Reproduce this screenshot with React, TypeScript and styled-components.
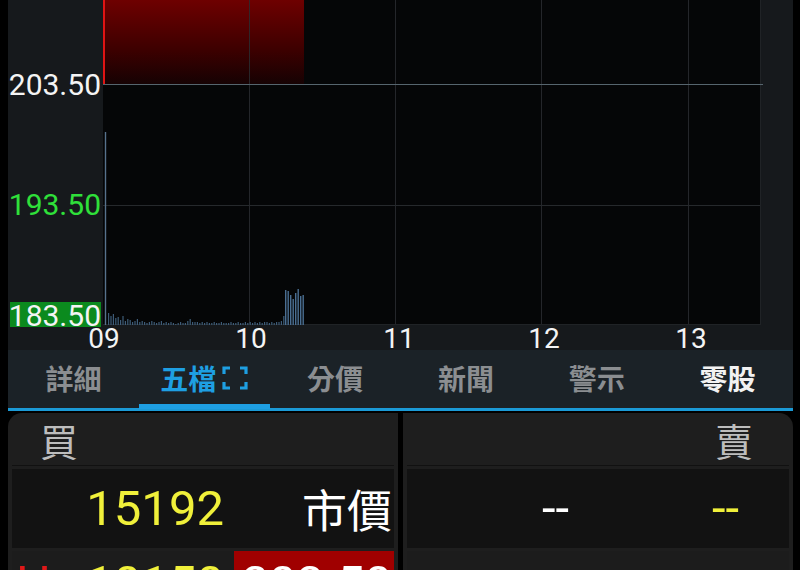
import styled, { createGlobalStyle } from "styled-components";

const GlobalStyle = createGlobalStyle`
  html, body {
    margin: 0;
    padding: 0;
    background: #000;
    overflow: hidden;
  }
  body {
    font-family: Roboto, "Noto Sans CJK TC", sans-serif;
  }
`;

const Screen = styled.div`
  width: 800px;
  height: 570px;
  box-sizing: border-box;
  padding: 0 7px 0 8px;
  background: #000;
  display: flex;
  flex-direction: column;
  overflow: hidden;
`;

const ChartSvg = styled.svg`
  display: block;
  flex: none;
`;

const TabBar = styled.nav`
  flex: none;
  height: 58px;
  display: flex;
  background: #1b2227;
  border-bottom: 3px solid #1b9ad6;
`;

const Tab = styled.div<{ $active?: boolean; $bright?: boolean }>`
  flex: 1;
  position: relative;
  display: flex;
  align-items: center;
  justify-content: center;
  gap: 6px;
  font-family: "Noto Sans CJK TC", sans-serif;
  font-weight: 700;
  font-size: 28px;
  padding-bottom: 2px;
  color: ${(p) => (p.$active ? "#1e9fe2" : p.$bright ? "#f2f2f2" : "#8b8e91")};

  &::after {
    content: "";
    display: ${(p) => (p.$active ? "block" : "none")};
    position: absolute;
    left: 0;
    right: 0;
    bottom: -1px;
    height: 5px;
    background: #1e9fe2;
  }
`;

const Book = styled.section`
  flex: 1;
  display: grid;
  grid-template-columns: 390px 1fr;
  gap: 5px;
  padding-top: 2px;
  background: #000;
  min-height: 0;
`;

const Side = styled.div<{ $right?: boolean }>`
  background: #1e1e1e;
  border-radius: ${(p) => (p.$right ? "0 14px 0 0" : "14px 0 0 0")};
  display: flex;
  flex-direction: column;
  gap: 3px;
  padding: 0 4px;
`;

const Header = styled.div<{ $right?: boolean }>`
  height: 52px;
  display: flex;
  align-items: center;
  justify-content: ${(p) => (p.$right ? "flex-end" : "flex-start")};
  padding: 0 36px 0 28px;
  font-family: "Noto Sans CJK TC", sans-serif;
  font-size: 38px;
  color: #bdbdbd;
  border-bottom: 1px solid #111;
`;

const Row = styled.div<{ $dark?: boolean }>`
  height: 79px;
  flex: none;
  display: flex;
  background: ${(p) => (p.$dark ? "#121212" : "#1c1c1c")};
`;

const Cell = styled.div<{ $w?: number; $color?: string; $bg?: string; $align?: string; $pr?: number; $pt?: number; $cjk?: boolean }>`
  ${(p) => (p.$w ? `width: ${p.$w}px; flex: none;` : "flex: 1;")}
  display: flex;
  align-items: ${(p) => (p.$pt !== undefined ? "flex-start" : "center")};
  justify-content: ${(p) => p.$align || "flex-end"};
  padding-right: ${(p) => p.$pr ?? 0}px;
  padding-top: ${(p) => p.$pt ?? 0}px;
  box-sizing: border-box;
  font-family: ${(p) => (p.$cjk ? '"Noto Sans CJK TC", sans-serif' : 'Roboto, "Noto Sans CJK TC", sans-serif')};
  font-size: ${(p) => (p.$cjk ? 45 : 49)}px;
  line-height: 1;
  color: ${(p) => p.$color || "#fff"};
  background: ${(p) => p.$bg || "transparent"};
  white-space: nowrap;
`;

const Mark = styled.span`
  color: #e01818;
  margin-right: auto;
  padding-left: 4px;
`;

// plot geometry (svg coords, page x - 8)
const PL = 95;
const PR = 753;
const PB = 325;

const smallBars = [
  12, 9, 11, 7, 8, 5, 9, 4, 6, 5, 3, 4, 6, 3, 4, 3, 2, 3, 4, 3, 2, 3, 4, 2, 3, 2, 3, 2, 1, 2, 3, 2,
  2, 4, 6, 3, 3, 3, 2, 3, 2, 3, 2, 2, 3, 2, 2, 3, 2, 2, 2, 3, 2, 2, 3, 2, 2, 3, 2, 3, 2, 3, 2, 3,
  2, 3, 3, 2, 3, 2, 3, 3, 4, 9,
];
const bigBars = [35, 34, 30, 26, 32, 36, 29, 30];

function Chart() {
  const vLines = [241, 387, 533, 680];
  const xLabels: [string, number][] = [
    ["09", 96],
    ["10", 243],
    ["11", 391],
    ["12", 536],
    ["13", 683],
  ];
  return (
    <ChartSvg width={785} height={350} viewBox="0 0 785 350">
      <defs>
        <linearGradient id="upFill" x1="0" y1="0" x2="0" y2="1">
          <stop offset="0" stopColor="#6e0000" />
          <stop offset="0.6" stopColor="#3c0000" />
          <stop offset="1" stopColor="#160203" />
        </linearGradient>
      </defs>
      <rect x={0} y={0} width={785} height={350} fill="#16191c" />
      <rect x={PL} y={0} width={PR - PL} height={PB} fill="#050607" />
      <rect x={PL} y={0} width={201} height={84} fill="url(#upFill)" />
      {vLines.map((x) => (
        <line key={x} x1={x + 0.5} y1={0} x2={x + 0.5} y2={PB} stroke="#2a2d30" strokeOpacity={0.85} strokeWidth={1} />
      ))}
      <line x1={PL} y1={205.5} x2={PR} y2={205.5} stroke="#26292c" strokeWidth={1} />
      <line x1={PL} y1={PB - 0.5} x2={PR} y2={PB - 0.5} stroke="#202326" strokeWidth={1} />
      <line x1={PR - 0.5} y1={0} x2={PR - 0.5} y2={PB} stroke="#202326" strokeWidth={1} />
      <line x1={PL} y1={84.5} x2={PR + 2} y2={84.5} stroke="#56656e" strokeWidth={1.2} />
      <line x1={PL + 1} y1={0} x2={PL + 1} y2={84} stroke="#e01414" strokeWidth={2} />

      <line x1={PL + 2.5} y1={132} x2={PL + 2.5} y2={PB} stroke="#56728c" strokeWidth={1.4} />
      {smallBars.map((h, i) => (
        <rect key={i} x={PL + 5 + i * 2.4} y={PB - h} width={1.2} height={h} fill="#3e5c78" />
      ))}
      {bigBars.map((h, i) => (
        <rect key={"b" + i} x={277 + i * 2.5} y={PB - h} width={1.4} height={h} fill="#4a6e92" />
      ))}

      <g fontFamily="Roboto, sans-serif" fontSize={30} textAnchor="end">
        <text x={93} y={95} fill="#f4f4f4">203.50</text>
        <text x={93} y={215} fill="#2fe03a">193.50</text>
        <rect x={2} y={302} width={91} height={25} fill="#0b8a1e" />
        <text x={93} y={326} fill="#f4f4f4">183.50</text>
      </g>
      <g fontFamily="Roboto, sans-serif" fontSize={28} textAnchor="middle" fill="#f4f4f4">
        {xLabels.map(([t, x]) => (
          <text key={t} x={x} y={348}>{t}</text>
        ))}
      </g>
    </ChartSvg>
  );
}

function FocusIcon() {
  return (
    <svg width="26" height="24" viewBox="0 0 26 24" fill="none" stroke="#1e9fe2" strokeWidth="3.2">
      <path d="M8 2H2v6M2 16v6h6M18 2h6v6M24 16v6h-6" />
    </svg>
  );
}

const tabs = ["詳細", "五檔", "分價", "新聞", "警示", "零股"];

export default function App() {
  return (
    <Screen>
      <GlobalStyle />
      <Chart />
      <TabBar>
        {tabs.map((t, i) => (
          <Tab key={t} $active={i === 1} $bright={i === 5}>
            {t}
            {i === 1 && <FocusIcon />}
          </Tab>
        ))}
      </TabBar>
      <Book>
        <Side>
          <Header>買</Header>
          <Row $dark>
            <Cell $color="#f0f03a" $pr={10}>15192</Cell>
            <Cell $w={160} $pr={2} $cjk>
              市價
            </Cell>
          </Row>
          <Row>
            <Cell $color="#f0f03a" $pr={10} $pt={8}>
              <Mark>H</Mark>10150
            </Cell>
            <Cell $w={160} $pr={2} $pt={8} $bg="#a00000">
              203.50
            </Cell>
          </Row>
        </Side>
        <Side $right>
          <Header $right>賣</Header>
          <Row $dark>
            <Cell $w={162} $pr={0}>--</Cell>
            <Cell $color="#f0f03a" $pr={50}>--</Cell>
          </Row>
          <Row />
        </Side>
      </Book>
    </Screen>
  );
}
